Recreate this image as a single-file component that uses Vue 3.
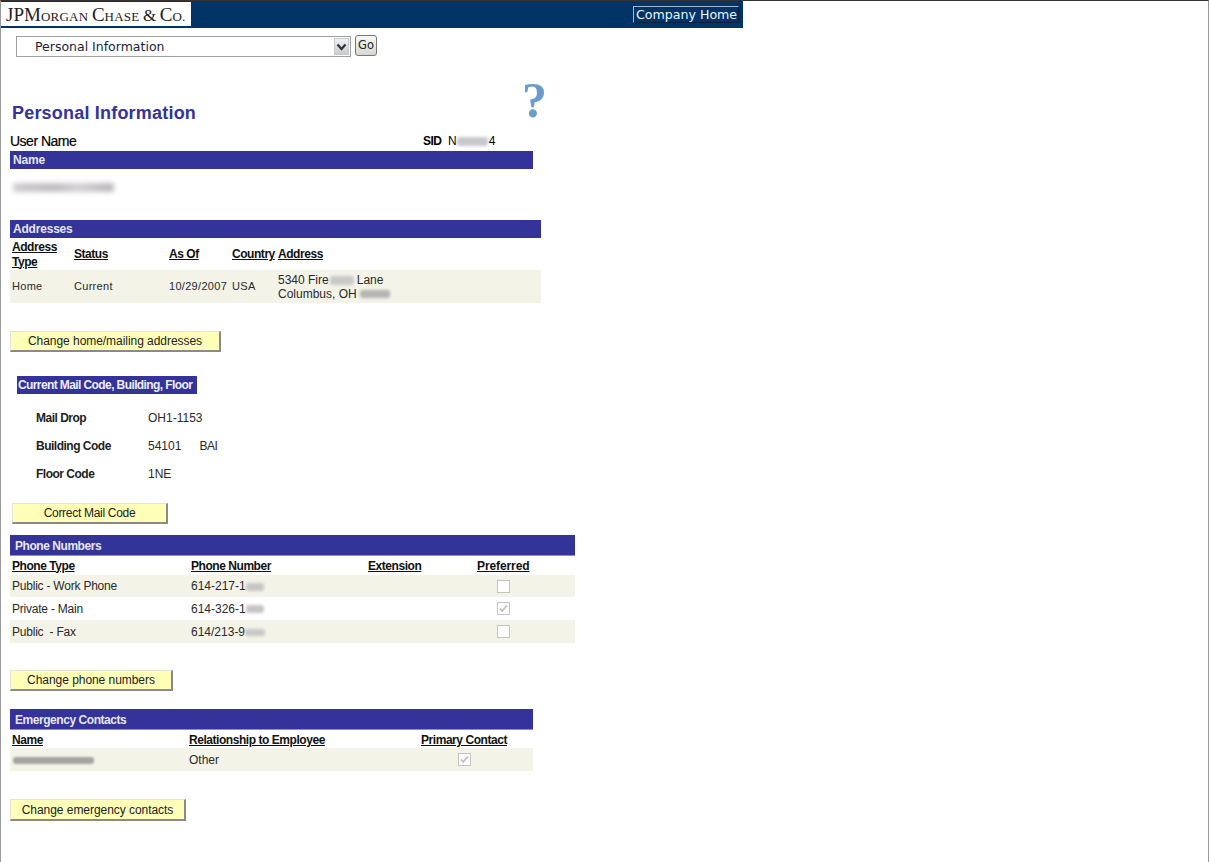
<script setup>
const phones = [
  { type: 'Public - Work Phone', number: '614-217-1', smear: 's-ph', cls: 'row1 shade', checked: false },
  { type: 'Private - Main', number: '614-326-1', smear: 's-ph', cls: 'row2', checked: true },
  { type: 'Public \u00a0- Fax', number: '614/213-9', smear: 's-ph2', cls: 'row3 shade', checked: false },
]
</script>

<template>
  <div class="frame">
    <header class="top">
      <div class="logo"><span class="logo-big">J</span><span class="logo-big">P</span><span class="logo-big">M</span>organ <span class="logo-big">C</span>hase <span class="logo-amp">&amp;</span> <span class="logo-big">C</span>o.</div>
      <a class="home">Company Home</a>
    </header>

    <div class="picker">
      <div class="select">
        <span class="select-text">Personal Information</span>
        <span class="select-arrow">
          <svg width="11" height="8" viewBox="0 0 11 8"><path d="M1.5 1.5 5.5 6 9.5 1.5" fill="none" stroke="#333" stroke-width="2.2"/></svg>
        </span>
      </div>
      <button class="go">Go</button>
    </div>

    <div class="title-row">
      <h1>Personal Information</h1>
      <span class="help">?</span>
    </div>

    <div class="user-row">
      <span class="user">User Name</span>
      <span class="sid">SID</span>
      <span class="sid-val">N<i class="smear s-sid"></i>4</span>
    </div>

    <div class="bar w523">Name</div>
    <div class="name-blur"><i class="smear s-name"></i></div>

    <div class="bar w531">Addresses</div>
    <div class="grid addr head-addr w531">
      <u>Address<br>Type</u><u>Status</u><u>As Of</u><u>Country</u><u>Address</u>
    </div>
    <div class="grid addr body-addr w531 shade">
      <span class="lift">Home</span><span class="lift">Current</span><span class="lift">10/29/2007</span><span class="lift">USA</span>
      <span class="street">5340 Fire<i class="smear s-street"></i>Lane<br>Columbus, OH <i class="smear s-zip"></i></span>
    </div>

    <button class="btn b-home">Change home/mailing addresses</button>

    <div class="mail-bar">Current Mail Code, Building, Floor</div>
    <dl class="mail">
      <dt>Mail Drop</dt><dd>OH1-1153</dd>
      <dt>Building Code</dt><dd>54101<span class="bai">BAI</span></dd>
      <dt>Floor Code</dt><dd>1NE</dd>
    </dl>
    <button class="btn b-mail">Correct Mail Code</button>

    <div class="bar tall w565">Phone Numbers</div>
    <div class="grid phone head w565">
      <u>Phone Type</u><u>Phone Number</u><u>Extension</u><u class="pref">Preferred</u>
    </div>
    <div v-for="p in phones" :key="p.number" class="grid phone w565" :class="p.cls">
      <span class="cell-type">{{ p.type }}</span>
      <span>{{ p.number }}<i class="smear" :class="p.smear"></i></span>
      <span></span>
      <span class="check-cell">
        <b class="box"><svg v-if="p.checked" width="9" height="9" viewBox="0 0 9 9"><path d="M1 4.5 3.2 7 8 1.5" fill="none" stroke="#bdbdbd" stroke-width="1.8"/></svg></b>
      </span>
    </div>

    <button class="btn b-phone">Change phone numbers</button>

    <div class="bar tall w523">Emergency Contacts</div>
    <div class="grid emer head-emer w523">
      <u>Name</u><u>Relationship to Employee</u><u>Primary Contact</u>
    </div>
    <div class="grid emer row-emer w523 shade">
      <span><i class="smear s-contact"></i></span><span>Other</span>
      <span class="check-cell"><b class="box"><svg width="9" height="9" viewBox="0 0 9 9"><path d="M1 4.5 3.2 7 8 1.5" fill="none" stroke="#bdbdbd" stroke-width="1.8"/></svg></b></span>
    </div>

    <button class="btn b-emer">Change emergency contacts</button>
  </div>
</template>

<style>
html, body { margin: 0; background: #fff; }
</style>

<style scoped>
.frame {
  box-sizing: border-box;
  width: 1209px;
  height: 862px;
  overflow: hidden;
  border-top: 1px solid #333;
  border-left: 1px solid #999;
  border-right: 1px solid #999;
  font-family: "Liberation Sans", Arial, sans-serif;
  font-size: 12px;
  color: #2a2a2a;
  background: #fff;
}
.top {
  width: 742px;
  height: 27px;
  background: #003366;
  display: flex;
  justify-content: space-between;
  align-items: flex-start;
}
.logo {
  margin-top: 1px;
  box-sizing: border-box;
  width: 190px;
  height: 24px;
  background: #fff;
  padding-left: 5px;
  font-family: "Liberation Serif", serif;
  font-size: 13px;
  letter-spacing: 0.25px;
  line-height: 26px;
  text-transform: uppercase;
  color: #222;
  white-space: nowrap;
}
.logo-big { font-size: 19px; letter-spacing: 0; }
.logo-amp { font-size: 17px; letter-spacing: 0; }
.home {
  margin: 5px 4px 0 0;
  box-sizing: border-box;
  width: 106px;
  height: 17px;
  border: 1px solid;
  border-color: #aab4c4 #0a1f3c #0a1f3c #aab4c4;
  color: #f2f4f8;
  font-family: "DejaVu Sans", sans-serif;
  font-size: 12.6px;
  line-height: 15px;
  padding-left: 2px;
  white-space: nowrap;
}
.picker {
  display: flex;
  align-items: flex-start;
  margin: 7px 0 0 15px;
  height: 22px;
}
.select {
  margin-top: 1px;
  box-sizing: border-box;
  width: 335px;
  height: 21px;
  border: 1px solid #a0a0a0;
  display: flex;
  justify-content: space-between;
  align-items: stretch;
  padding: 1px;
  color: #1c1c3a;
}
.select-text {
  padding: 1px 0 0 17px;
  font-family: "DejaVu Sans", sans-serif;
  font-size: 12.5px;
  line-height: 16px;
}
.select-arrow {
  width: 15px;
  background: linear-gradient(#eef0f2, #c9ccd2);
  border: 1px solid #c6c9ce;
  box-sizing: border-box;
  display: flex;
  align-items: center;
  justify-content: center;
}
.go {
  margin-left: 4px;
  width: 22px;
  height: 21px;
  padding: 0 0 2px;
  border: 1px solid #777;
  border-radius: 3px;
  background: linear-gradient(#f8f8f6, #d8d8d2);
  font-family: "DejaVu Sans", sans-serif;
  font-size: 11.5px;
  color: #222;
}
.title-row {
  box-sizing: border-box;
  width: 540px;
  height: 46px;
  margin: 21px 0 0 11px;
  display: flex;
  justify-content: space-between;
  align-items: flex-end;
}
h1 {
  margin: 0;
  font-size: 18px;
  line-height: 22px;
  font-weight: bold;
  letter-spacing: 0.2px;
  color: #333399;
}
.help {
  align-self: flex-start;
  margin: -1px 5px 0 0;
  font-family: "Liberation Serif", serif;
  font-weight: bold;
  font-size: 50px;
  line-height: 46px;
  color: #6a9ccb;
  filter: blur(0.4px);
}
.user-row {
  margin: 8px 0 1px 9px;
  height: 18px;
  display: flex;
  align-items: center;
  color: #000;
}
.user { width: 413px; font-size: 14px; letter-spacing: -0.5px; line-height: 18px; -webkit-text-stroke: 0.2px #000; }
.sid { width: 25px; font-weight: bold; font-size: 12px; letter-spacing: -0.5px; }
.sid-val { font-size: 12px; display: flex; align-items: center; }
.bar {
  margin-left: 9px;
  box-sizing: border-box;
  height: 18px;
  background: #333399;
  color: #e6e6f0;
  font-weight: bold;
  line-height: 18px;
  padding-left: 3px;
  font-size: 12px;
  letter-spacing: -0.2px;
}
.bar.tall {
  height: 21px;
  line-height: 21px;
  padding-left: 5px;
  border-bottom: 1px solid #8e8ec8;
  letter-spacing: -0.45px;
}
.w523 { width: 523px; }
.w531 { width: 531px; }
.w565 { width: 565px; }
.name-blur { margin: 11px 0 25px 9px; height: 15px; }
.smear {
  display: inline-block;
  vertical-align: middle;
  background: #9a9a9e;
  filter: blur(1.6px);
  border-radius: 3px;
}
.s-sid { width: 31px; height: 9px; background: #c8c8cc; margin: 0 1px 0 0; }
.s-name { width: 101px; height: 9px; margin-left: 3px; background: linear-gradient(90deg, #cfccd0, #bfbcc2 40%, #d2d0d2 65%, #b8b6bb); filter: blur(2.4px); }
.s-street { width: 24px; height: 9px; background: #c9c9c9; margin: 0 3px 0 1px; }
.s-zip { width: 30px; height: 8px; background: #b4b4b4; }
.s-ph { width: 18px; height: 8px; background: #c5c5c5; }
.s-ph2 { width: 20px; height: 7px; background: #c8c8c8; }
.s-contact { width: 81px; height: 7px; background: #a4a4a4; margin-left: 1px; filter: blur(1.3px); }
.grid {
  margin-left: 9px;
  display: grid;
  align-items: center;
  padding-left: 2px;
  box-sizing: border-box;
}
.grid u { font-weight: bold; color: #111; letter-spacing: -0.45px; }
.grid u.pref { letter-spacing: -0.1px; }
.shade { background: #f3f3e8; }
.addr { grid-template-columns: 62px 95px 63px 46px 1fr; }
.head-addr { height: 32px; line-height: 15px; padding-top: 1px; }
.body-addr { height: 33px; font-size: 11px; letter-spacing: 0.3px; }
.lift { padding-bottom: 1px; }
.street { font-size: 12px; line-height: 14px; letter-spacing: 0; }
.btn {
  display: block;
  box-sizing: border-box;
  padding: 0;
  font-family: "Liberation Sans", Arial, sans-serif;
  font-size: 12px;
  letter-spacing: -0.05px;
  color: #222;
  background: #ffffb8;
  border: 1px solid;
  border-color: #e4e4d8 #8a8a8a #8a8a8a #e4e4d8;
  border-width: 1px 2px 2px 1px;
  height: 21px;
  line-height: 17px;
}
.b-home { width: 211px; margin: 28px 0 0 9px; }
.mail-bar {
  margin: 24px 0 0 16px;
  width: 180px;
  height: 18px;
  line-height: 18px;
  background: #333399;
  color: #eeeef6;
  font-weight: bold;
  font-size: 12px;
  letter-spacing: -0.6px;
  padding-left: 1px;
  box-sizing: border-box;
  white-space: nowrap;
}
.mail {
  margin: 10px 0 0 35px;
  display: grid;
  grid-template-columns: 112px 1fr;
  grid-auto-rows: 28px;
  align-items: center;
}
.mail dt { font-weight: bold; color: #222; letter-spacing: -0.5px; }
.mail dd { margin: 0; }
.bai { margin-left: 18px; letter-spacing: -0.4px; }
.b-mail { width: 156px; margin: 15px 0 0 11px; letter-spacing: -0.3px; }
.b-mail + .bar { margin-top: 11px; }
.phone { grid-template-columns: 179px 177px 109px 1fr; }
.head { height: 19px; }
.row1 { height: 22px; }
.row2 { height: 23px; }
.row3 { height: 23px; }
.cell-type { letter-spacing: -0.22px; }
.check-cell { display: flex; width: 52px; justify-content: center; }
.box {
  box-sizing: border-box;
  width: 13px;
  height: 13px;
  background: #fff;
  border: 1px solid #c4c4c4;
  display: flex;
  align-items: center;
  justify-content: center;
}
.b-phone { width: 163px; margin: 27px 0 0 9px; }
.b-phone + .bar { margin-top: 18px; }
.bar.tall { padding-top: 1px; }
.emer { grid-template-columns: 177px 232px 1fr; }
.head-emer { height: 18px; padding-top: 2px; }
.row-emer { height: 23px; }
.emer .check-cell { width: 87px; }
.b-emer { width: 176px; height: 22px; margin: 28px 0 0 9px; padding-top: 1px; }
</style>
